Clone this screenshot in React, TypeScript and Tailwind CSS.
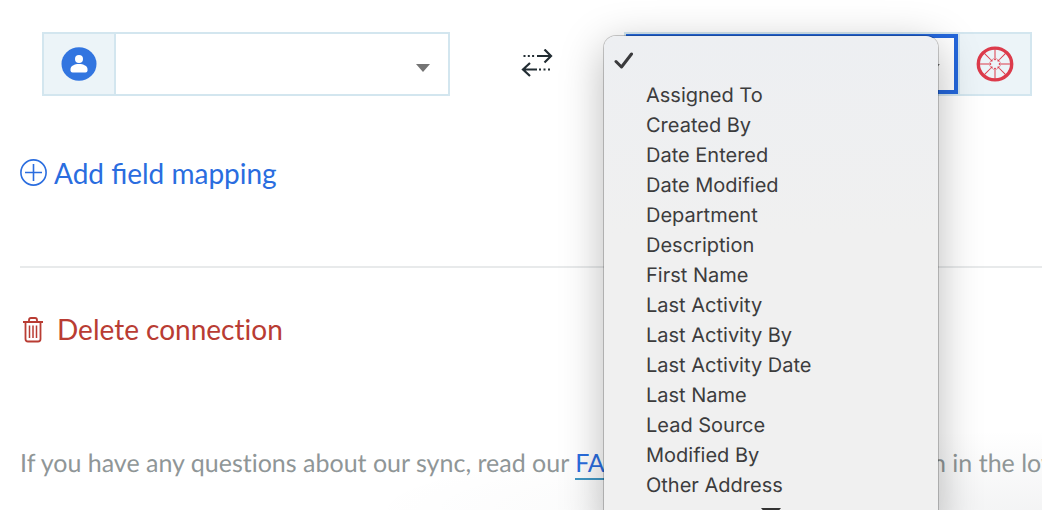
import React, { useState } from 'react';

const fields = [
  'Assigned To',
  'Created By',
  'Date Entered',
  'Date Modified',
  'Department',
  'Description',
  'First Name',
  'Last Activity',
  'Last Activity By',
  'Last Activity Date',
  'Last Name',
  'Lead Source',
  'Modified By',
  'Other Address',
];

export default function App() {
  const [selected, setSelected] = useState('');

  return (
    <div className="h-screen overflow-hidden bg-white font-['Lato',sans-serif] [text-rendering:geometricPrecision] bg-[radial-gradient(ellipse_680px_80px_at_bottom_right,rgba(29,39,54,0.05),transparent)]">
      <main className="pl-5 pt-8">
        {/* Field mapping row */}
        <div className="flex items-center pl-[22px] pr-[10px]">
          <div className="flex h-16 flex-1 border-2 border-[#d3e6ef]">
            <div className="flex w-[72px] items-center justify-center border-r-2 border-[#d3e6ef] bg-[#ecf4f8]">
              <ContactIcon />
            </div>
            <FieldSelect label="Contact field" value="" onChange={() => {}} />
          </div>

          <div className="flex w-[174px] justify-center">
            <SyncArrows />
          </div>

          <div className="relative flex h-16 flex-1 border-2 border-[#d3e6ef]">
            <div className="flex flex-1 ring-4 ring-inset ring-[#2467dc]">
              <FieldSelect label="CRM field" value={selected} onChange={setSelected} />
            </div>
            <div className="flex w-[72px] items-center justify-center border-l-2 border-[#d3e6ef] bg-[#ecf4f8]">
              <WheelIcon />
            </div>
            <FieldMenu selected={selected} onSelect={setSelected} />
          </div>
        </div>

        <button type="button" className="mt-[59px] flex items-center gap-[6px] text-[28px] leading-9 text-[#2a6ddf]">
          <PlusCircle />
          Add field mapping
        </button>

        <hr className="mt-[75px] border-t-2 border-[#e8eaeb]" />

        <button type="button" className="ml-[2px] mt-[43px] flex items-center gap-[13px] text-[28px] leading-9 text-[#b93c33] [font-variant-ligatures:none]">
          <TrashIcon />
          Delete connection
        </button>

        <p className="mt-[98px] whitespace-nowrap text-[25px] leading-9 text-[#8f9697] [font-variant-ligatures:none]">
          If you have any questions about our sync, read our{' '}
          <a href="#faq" className="border-b-2 border-[#3f97c4] text-[#2a6ddf]">FAQ</a>
          {' '}or talk to us via the chat icon in the lower right corner.
        </p>
      </main>
    </div>
  );
}

interface FieldSelectProps {
  label: string;
  value: string;
  onChange: (value: string) => void;
}

function FieldSelect({ label, value, onChange }: FieldSelectProps) {
  return (
    <div className="relative flex flex-1">
      <select
        aria-label={label}
        value={value}
        onChange={(e) => onChange(e.target.value)}
        className="w-full appearance-none bg-transparent px-4 text-xl outline-none"
      >
        <option value=""></option>
        {fields.map((field) => (
          <option key={field} value={field}>{field}</option>
        ))}
      </select>
      <svg className="pointer-events-none absolute right-[18px] top-[30px]" width="14" height="8" viewBox="0 0 14 8" fill="#747474">
        <path d="M0 0h14L7 8z" />
      </svg>
    </div>
  );
}

interface FieldMenuProps {
  selected: string;
  onSelect: (value: string) => void;
}

function FieldMenu({ selected, onSelect }: FieldMenuProps) {
  return (
    <ul
      role="listbox"
      aria-label="CRM field options"
      className="absolute -left-[22px] right-[92px] top-[2px] z-10 rounded-t-xl bg-linear-to-b from-[#edeff2] to-[#f0f0f0] to-40% pt-[10px] font-['Inter',sans-serif] text-xl leading-[30px] text-[#3c3c3d] shadow-[0_0_0_1px_rgba(0,0,0,0.2),0_10px_44px_rgba(0,0,0,0.28)]"
    >
      {['', ...fields].map((field) => (
        <li
          key={field}
          role="option"
          aria-selected={field === selected}
          onClick={() => onSelect(field)}
          className="flex h-[30px] items-center first:mb-1"
        >
          <span className="flex w-[42px] pl-[10px]">
            {field === selected && <CheckMark />}
          </span>
          {field}
        </li>
      ))}
      <li role="presentation" className="flex h-[30px] justify-center pt-2">
        <svg width="20" height="12" viewBox="0 0 20 12" fill="#333">
          <path d="M0 0h20L10 12z" />
        </svg>
      </li>
    </ul>
  );
}

function CheckMark() {
  return (
    <svg width="20" height="18" viewBox="0 0 20 18" fill="none" stroke="#3a3a3c" strokeWidth="3" strokeLinecap="round" strokeLinejoin="round">
      <path d="M2 9.5L7.5 15L17.5 2" />
    </svg>
  );
}

function ContactIcon() {
  return (
    <svg width="36" height="34" viewBox="0 0 36 34">
      <ellipse cx="18" cy="17" rx="17.5" ry="16.7" fill="#3275e0" />
      <circle cx="18" cy="12" r="4" fill="#fff" />
      <path d="M9.5 22c0-3 4-5 8.5-5s8.5 2 8.5 5v1.5q0 2-2 2h-13q-2 0-2-2z" fill="#fff" />
    </svg>
  );
}

function SyncArrows() {
  return (
    <svg width="32" height="30" viewBox="0 0 32 30" fill="none" stroke="#222d33" strokeWidth="2.2">
      <path d="M16 7h14M23.5 0.5L30 7l-6.5 6.5" />
      <path d="M2.5 7h12" strokeDasharray="2 2.3" />
      <path d="M16 20.5H2M9 14L2 20.5L9 27" />
      <path d="M18 20.5h12" strokeDasharray="2 2.5" />
    </svg>
  );
}

function WheelIcon() {
  return (
    <svg width="38" height="36" viewBox="0 0 38 36" fill="none" stroke="#dc3b4b">
      <ellipse cx="19" cy="18" rx="16.7" ry="15.9" strokeWidth="3.4" />
      {[0, 45, 90, 135, 180, 225, 270, 315].map((angle) => (
        <g key={angle} transform={`rotate(${angle} 19 18)`}>
          <path d="M19 3v9" strokeWidth="1" />
          <path d="M17 12.5h4L19 14.5z" fill="#dc3b4b" stroke="none" />
        </g>
      ))}
    </svg>
  );
}

function PlusCircle() {
  return (
    <svg width="28" height="28" viewBox="0 0 28 28" fill="none" stroke="#2a6ddf" strokeWidth="1.6">
      <circle cx="13.5" cy="13.5" r="12.6" />
      <path d="M13.5 5v17M5 13.5h17" />
    </svg>
  );
}

function TrashIcon() {
  return (
    <svg width="22" height="28" viewBox="0 0 22 28" fill="none" stroke="#b93c33" strokeWidth="1.8">
      <path d="M1 7h20M7 7V5q0-2 2-2h4q2 0 2 2v2" />
      <path d="M3.5 7v17q0 2.5 2.5 2.5h10q2.5 0 2.5-2.5V7" />
      <path d="M7.5 10.5v12.5M11 10.5v12.5M14.5 10.5v12.5" strokeWidth="1.5" />
    </svg>
  );
}
